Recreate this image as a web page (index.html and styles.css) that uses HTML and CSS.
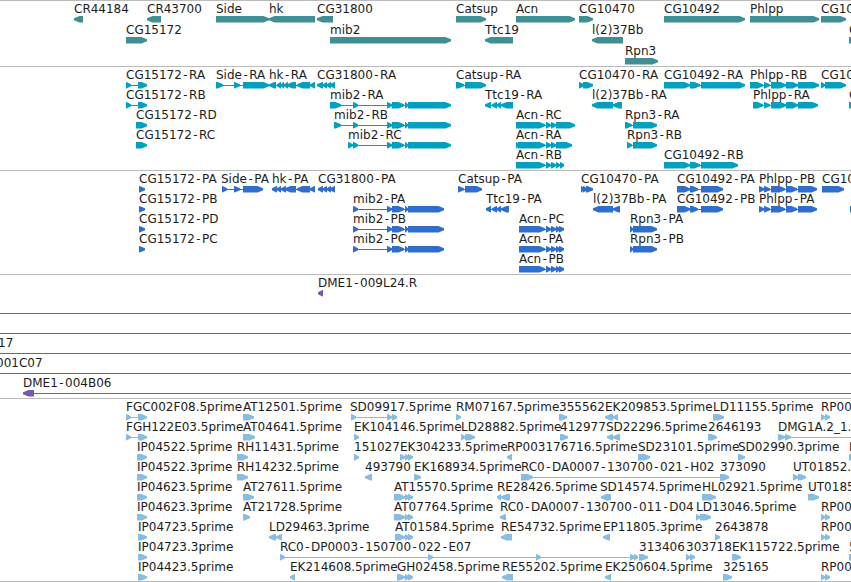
FILE: index.html
```html
<!DOCTYPE html>
<html lang="en">
<head>
<meta charset="UTF-8" />
<title>Genome Browser</title>
<link rel="stylesheet" href="styles.css">
</head>
<body>

<main class="browser">
  <section class="track genes"><svg id="genes"></svg></section>
  <section class="track transcripts"><svg id="transcripts"></svg></section>
  <section class="track proteins"><svg id="proteins"></svg></section>
  <section class="track bacs"><svg id="bacs"></svg></section>
  <section class="track ests"><svg id="ests"></svg></section>
</main>

<script src="tracks.js"></script>
</body>
</html>
```

FILE: styles.css
```css
body {
  margin: 0;
  background: #fff;
  overflow: hidden;
}

.browser {
  display: flex;
  flex-direction: column;
  width: 851px;
  height: 582px;
  overflow: hidden;
}

.track {
  box-sizing: border-box;
  flex: none;
  border-top: 1px solid #bbb;
  overflow: hidden;
}

.track svg {
  display: block;
  width: 100%;
  height: 100%;
}

/* Track heights and feature colours */
.genes { height: 66px; fill: #408f94; }
.transcripts { height: 104px; fill: #00a0c0; }
.proteins { height: 104px; fill: #306ece; }
.bacs { height: 124px; fill: #7759a9; }
.ests { height: 184px; fill: #88bddf; border-bottom: 1px solid #bbb; }

.label {
  font-family: "DejaVu Sans", sans-serif;
  font-size: 12px;
  fill: #1c1c1c;
  white-space: pre;
}

/* the mono dash is wider, keeps long ids readable */
.dash {
  font-family: "DejaVu Sans Mono", monospace;
}
```

FILE: tracks.js
```js
// feature: [row, label, strand, [[start, end], ...], labelX]
const tail = [[387, 392], [392, 404], [405, 408], [408, 451]];
const mibP = [[353, 358], [387, 392], [392, 404], [405, 408], [408, 444]];
const acnP = [[519, 545], [546, 551], [551, 556], [556, 560], [559, 564]];
const phlP = [[759, 764], [764, 770], [771, 785], [786, 797], [798, 817]];
const cgP = [[677, 690], [690, 698], [701, 723]];
const rp = [[821, 825], [825, 830]];
const at = [[405, 409], [408, 413]];

const genes = [
  [0, 'CR44184', -1, [[74, 83]]],
  [0, 'CR43700', -1, [[147, 161]]],
  [0, 'Side', 1, [[216, 269]]],
  [0, 'hk', -1, [[269, 315]]],
  [0, 'CG31800', -1, [[317, 333]]],
  [0, 'Catsup', 1, [[456, 486]]],
  [0, 'Acn', 1, [[516, 575]]],
  [0, 'CG10470', 1, [[579, 593]]],
  [0, 'CG10492', 1, [[664, 745]]],
  [0, 'Phlpp', 1, [[750, 819]]],
  [0, 'CG10', 1, [[821, 846]]],
  [1, 'CG15172', 1, [[126, 147]]],
  [1, 'mib2', 1, [[330, 451]]],
  [1, 'Ttc19', -1, [[485, 513]]],
  [1, 'l(2)37Bb', -1, [[592, 623]]],
  [1, 'C', 1, [[849, 870]]],
  [2, 'Rpn3', 1, [[625, 658]]]
];

const transcripts = [
  [0, 'CG15172-RA', 1, [[126, 131], [138, 147]]],
  [0, 'Side-RA', 1, [[216, 223], [234, 240], [243, 269]]],
  [0, 'hk-RA', -1, [[269, 276], [277, 281], [281, 284], [284, 288], [287, 296], [297, 310], [310, 315]]],
  [0, 'CG31800-RA', -1, [[317, 323], [323, 327], [327, 331], [330, 335]]],
  [0, 'Catsup-RA', 1, [[456, 464], [465, 486]]],
  [0, 'CG10470-RA', 1, [[579, 584], [583, 593]]],
  [0, 'CG10492-RA', 1, [[664, 690], [690, 700], [701, 745]]],
  [0, 'Phlpp-RB', 1, [[750, 763], [764, 770], [771, 786], [786, 798], [798, 819]]],
  [0, 'CG10', 1, [[821, 825], [825, 846]]],
  [1, 'CG15172-RB', 1, [[126, 131], [138, 147]]],
  [1, 'mib2-RA', 1, [[330, 341], [353, 358], ...tail]],
  [1, 'Ttc19-RA', -1, [[485, 491], [492, 497], [497, 501], [501, 513]]],
  [1, 'l(2)37Bb-RA', -1, [[592, 613], [613, 622]]],
  [1, 'Phlpp-RA', 1, [[753, 763], [764, 770], [771, 786], [786, 798], [798, 818]]],
  [1, 'C', 1, [[849, 870]]],
  [2, 'CG15172-RD', 1, [[136, 147]]],
  [2, 'mib2-RB', 1, [[334, 341], [353, 358], ...tail]],
  [2, 'Acn-RC', 1, [[516, 545], [546, 551], [551, 556], [556, 575]]],
  [2, 'Rpn3-RA', 1, [[625, 632], [633, 657]]],
  [3, 'CG15172-RC', 1, [[136, 147]]],
  [3, 'mib2-RC', 1, [[348, 353], [353, 358], ...tail]],
  [3, 'Acn-RA', 1, [[516, 519], [518, 545], [546, 551], [551, 556], [556, 572]]],
  [3, 'Rpn3-RB', 1, [[627, 632], [633, 657]]],
  [4, 'Acn-RB', 1, [[516, 545], [546, 551], [551, 556], [556, 560], [560, 564]]],
  [4, 'CG10492-RB', 1, [[664, 690], [690, 700], [701, 738]]]
];

const proteins = [
  [0, 'CG15172-PA', 1, [[139, 145]]],
  [0, 'Side-PA', 1, [[222, 227], [234, 240], [243, 263]], 221],
  [0, 'hk-PA', -1, [[272, 277], [277, 281], [281, 286], [285, 296], [297, 310], [310, 315]]],
  [0, 'CG31800-PA', -1, [[318, 323], [323, 327], [327, 331], [330, 335]]],
  [0, 'Catsup-PA', 1, [[458, 464], [465, 482]]],
  [0, 'CG10470-PA', 1, [[581, 584], [583, 587], [586, 593]]],
  [0, 'CG10492-PA', 1, cgP],
  [0, 'Phlpp-PB', 1, phlP],
  [0, 'CG10', 1, [[822, 844]]],
  [1, 'CG15172-PB', 1, [[139, 145]]],
  [1, 'mib2-PA', 1, mibP],
  [1, 'Ttc19-PA', -1, [[486, 491], [492, 497], [497, 501], [501, 509]]],
  [1, 'l(2)37Bb-PA', -1, [[593, 613], [613, 620]]],
  [1, 'CG10492-PB', 1, cgP],
  [1, 'Phlpp-PA', 1, phlP],
  [1, '', 1, [[850, 870]]],
  [2, 'CG15172-PD', 1, [[139, 145]]],
  [2, 'mib2-PB', 1, mibP],
  [2, 'Acn-PC', 1, acnP],
  [2, 'Rpn3-PA', 1, [[630, 633], [633, 657]]],
  [3, 'CG15172-PC', 1, [[139, 145]]],
  [3, 'mib2-PC', 1, mibP],
  [3, 'Acn-PA', 1, acnP],
  [3, 'Rpn3-PB', 1, [[630, 633], [633, 657]]],
  [4, 'Acn-PB', 1, acnP]
];

const bacs = [
  [0, 'DME1-009L24.R', -1, [[318, 323]]],
  [1, '', -1, [[-20, -10], [870, 880]]],
  [2, '', -1, [[-20, -10], [870, 880]]],
  [3, '17', -1, [[-20, -10], [870, 880]], -2],
  [4, '001C07', -1, [[-20, -10], [870, 880]], -4],
  [5, 'DME1-004B06', -1, [[23, 34], [870, 880]]]
];

const ests = [
  [0, 'FGC002F08.5prime', 1, [[126, 131], [138, 147]]],
  [0, 'AT12501.5prime', 1, [[243, 254]]],
  [0, 'SD09917.5prime', 1, [[351, 356], [387, 392], [392, 397]], 350],
  [0, 'RM07167.5prime', 1, [[456, 461]]],
  [0, '355562', 1, [[559, 567]]],
  [0, 'EK209853.5prime', -1, [[605, 613], [613, 618]]],
  [0, 'LD11155.5prime', 1, [[713, 724]]],
  [0, 'RP00', 1, rp],
  [1, 'FGH122E03.5prime', 1, [[126, 131], [138, 147]]],
  [1, 'AT04641.5prime', 1, [[243, 255]]],
  [1, 'EK104146.5prime', 1, [[354, 359]]],
  [1, 'LD28882.5prime', 1, [[461, 465], [465, 475]]],
  [1, '412977', 1, [[560, 568]]],
  [1, 'SD22296.5prime', -1, [[607, 613], [613, 620]], 606],
  [1, '2646193', 1, [[708, 717]]],
  [1, 'DMG1A.2_1.', 1, [[778, 785], [785, 791], [870, 880]]],
  [2, 'IP04522.5prime', 1, [[137, 147]]],
  [2, 'RH11431.5prime', 1, [[237, 248]]],
  [2, '151027', 1, [[354, 359]]],
  [2, 'EK304233.5prime', 1, [[400, 405], ...at]],
  [2, 'RP003176716.5prime', -1, [[507, 512]]],
  [2, 'SD23101.5prime', 1, [[638, 650]]],
  [2, 'SD02990.3prime', 1, [[738, 745]]],
  [2, 'I', 1, [[849, 860]]],
  [3, 'IP04522.3prime', 1, [[137, 147]]],
  [3, 'RH14232.5prime', 1, [[237, 248]]],
  [3, '493790', -1, [[365, 372]]],
  [3, 'EK168934.5prime', 1, [[414, 421]]],
  [3, 'RC0-DA0007-130700-021-H02', 1, [[521, 533], [720, 729]]],
  [3, '373090', 1, [[720, 729]]],
  [3, 'UT01852.', 1, [[793, 798], [798, 806]]],
  [4, 'IP04623.5prime', 1, [[137, 147]]],
  [4, 'AT27611.5prime', 1, [[243, 254]]],
  [4, 'AT15570.5prime', 1, [[394, 405], ...at]],
  [4, 'RE28426.5prime', -1, [[497, 501], [501, 510]]],
  [4, 'SD14574.5prime', -1, [[601, 611]], 600],
  [4, 'HL02921.5prime', 1, [[702, 716]]],
  [4, 'UT0185', 1, [[808, 819]]],
  [5, 'IP04623.3prime', 1, [[137, 147]]],
  [5, 'AT21728.5prime', 1, [[243, 250]]],
  [5, 'AT07764.5prime', 1, [[394, 405], ...at]],
  [5, 'RC0-DA0007-130700-011-D04', -1, [[500, 506]]],
  [5, 'LD13046.5prime', 1, [[696, 700], [700, 711]]],
  [5, 'RP00', 1, rp],
  [6, 'IP04723.5prime', 1, [[138, 147]]],
  [6, 'LD29463.3prime', -1, [[269, 276], [276, 282]]],
  [6, 'AT01584.5prime', 1, [[395, 405], ...at]],
  [6, 'RE54732.5prime', -1, [[501, 512]]],
  [6, 'EP11805.3prime', -1, [[603, 610]]],
  [6, '2643878', 1, [[715, 720]]],
  [6, 'RP00', 1, rp],
  [7, 'IP04723.3prime', 1, [[138, 147]]],
  [7, 'RC0-DP0003-150700-022-E07', 1, [[280, 285], [428, 433], [536, 541], [630, 635], [634, 638]]],
  [7, '313406', 1, [[639, 648]]],
  [7, '303718', 1, [[686, 690], [690, 695]]],
  [7, 'EK115722.5prime', 1, [[732, 741]]],
  [7, '5', 1, [[849, 860]]],
  [8, 'IP04423.5prime', 1, [[138, 147]]],
  [8, 'EK214608.5prime', -1, [[290, 295]]],
  [8, 'GH02458.5prime', 1, [[397, 405], ...at]],
  [8, 'RE55202.5prime', -1, [[502, 513]]],
  [8, 'EK250604.5prime', -1, [[605, 611]]],
  [8, '325165', 1, [[723, 732]]],
  [8, 'RP00', 1, rp]
];

// block with a blunt pointed end on the strand side
function exon(start, end, strand, y) {
  const head = Math.min(end - start, 6);
  if (strand > 0) {
    const x = end - head;
    return `M${start} ${y}H${x + 0.5}L${end} ${y + 2.3}v2L${x + 0.5} ${y + 6.4}H${start}z`;
  }
  const x = start + head;
  return `M${end} ${y}H${x - 0.5}L${start} ${y + 2.3}v2L${x - 0.5} ${y + 6.4}H${end}z`;
}

function drawTrack(id, features, rowHeight) {
  let shapes = '';
  let labels = '';
  for (const [row, name, strand, exons, labelX] of features) {
    const y = row * rowHeight + 15;
    const first = exons[0][0];
    const last = exons[exons.length - 1][1];
    shapes += `<path d="M${first} ${y + 3}H${last}v1H${first}z"/>`;
    for (const [start, end] of exons) {
      shapes += `<path d="${exon(start, end, strand, y)}"/>`;
    }
    const text = name.replace(/-/g, '<tspan class="dash">-</tspan>');
    labels += `<text class="label" x="${labelX ?? first}" y="${y - 3}">${text}</text>`;
  }
  document.getElementById(id).innerHTML = shapes + labels;
}

drawTrack('genes', genes, 21);
drawTrack('transcripts', transcripts, 20);
drawTrack('proteins', proteins, 20);
drawTrack('bacs', bacs, 20);
drawTrack('ests', ests, 20);
```
